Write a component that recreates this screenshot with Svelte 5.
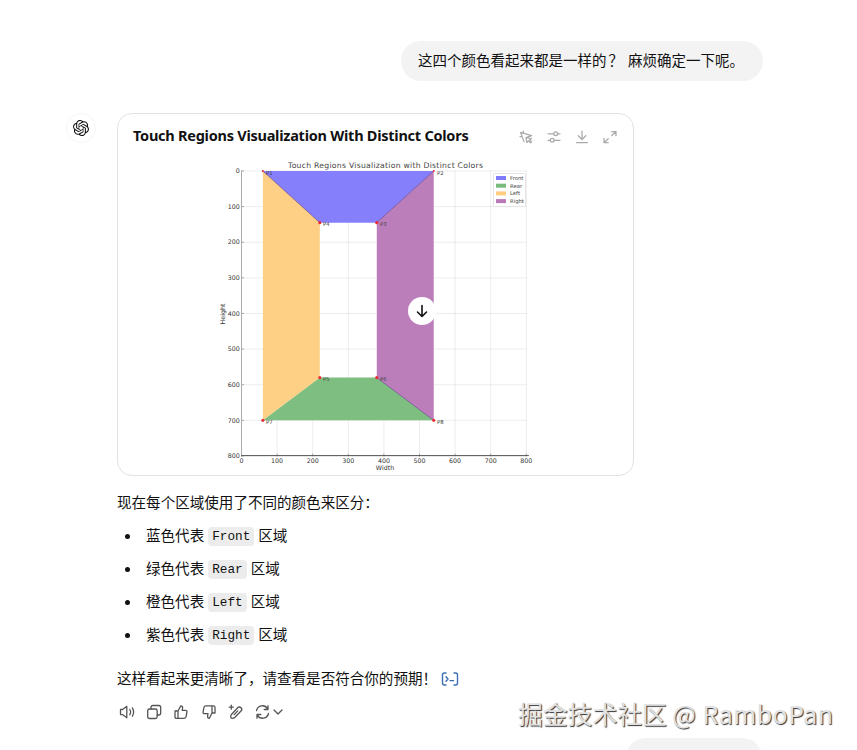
<script lang="ts">
interface Region {
	name: string;
	label: string;
	color: string;
	points: [number, number][];
}

const regions: readonly Region[] = [
	{ name: 'Front', label: '蓝色代表', color: '#817afb', points: [[60, 0], [540, 0], [380, 145], [220, 145]] },
	{ name: 'Rear', label: '绿色代表', color: '#79bb7c', points: [[220, 580], [380, 580], [540, 700], [60, 700]] },
	{ name: 'Left', label: '橙色代表', color: '#fdce80', points: [[60, 0], [220, 145], [220, 580], [60, 700]] },
	{ name: 'Right', label: '紫色代表', color: '#b979b8', points: [[540, 0], [540, 700], [380, 580], [380, 145]] },
];

const corners: readonly [number, number][] = [
	[60, 0], [540, 0], [380, 145], [220, 145],
	[220, 580], [380, 580], [60, 700], [540, 700],
];

const ticks = [0, 100, 200, 300, 400, 500, 600, 700, 800];

// Plot origin and scale inside the chart svg
const sx = (v: number) => 123.5 + v * 0.356;
const sy = (v: number) => 15 + v * 0.3562;
const toPoints = (points: [number, number][]) => points.map(([x, y]) => `${sx(x)},${sy(y)}`).join(' ');
</script>

<main class="chat">
	<div class="user-row">
		<p class="bubble">这四个颜色看起来都是一样的<span class="mark">？</span> 麻烦确定一下呢。</p>
	</div>

	<article class="reply">
		<div class="avatar">
			<svg width="16" height="16" viewBox="0 0 24 24" aria-hidden="true">
				<path d="M22.2819 9.8211a5.9847 5.9847 0 0 0-.5157-4.9108 6.0462 6.0462 0 0 0-6.5098-2.9A6.0651 6.0651 0 0 0 4.9807 4.1818a5.9847 5.9847 0 0 0-3.9977 2.9 6.0462 6.0462 0 0 0 .7427 7.0966 5.98 5.98 0 0 0 .511 4.9107 6.051 6.051 0 0 0 6.5146 2.9001A5.9847 5.9847 0 0 0 13.2599 24a6.0557 6.0557 0 0 0 5.7718-4.2058 5.9894 5.9894 0 0 0 3.9977-2.9001 6.0557 6.0557 0 0 0-.7475-7.0729zm-9.022 12.6081a4.4755 4.4755 0 0 1-2.8764-1.0408l.1419-.0804 4.7783-2.7582a.7948.7948 0 0 0 .3927-.6813v-6.7369l2.02 1.1686a.071.071 0 0 1 .038.052v5.5826a4.504 4.504 0 0 1-4.4945 4.4944zm-9.6607-4.1254a4.4708 4.4708 0 0 1-.5346-3.0137l.142.0852 4.783 2.7582a.7712.7712 0 0 0 .7806 0l5.8428-3.3685v2.3324a.0804.0804 0 0 1-.0332.0615L9.74 19.9502a4.4992 4.4992 0 0 1-6.1408-1.6464zM2.3408 7.8956a4.485 4.485 0 0 1 2.3655-1.9728V11.6a.7664.7664 0 0 0 .3879.6765l5.8144 3.3543-2.0201 1.1685a.0757.0757 0 0 1-.071 0l-4.8303-2.7865A4.504 4.504 0 0 1 2.3408 7.872zm16.5963 3.8558L13.1038 8.364 15.1192 7.2a.0757.0757 0 0 1 .071 0l4.8303 2.7913a4.4944 4.4944 0 0 1-.6765 8.1042v-5.6772a.79.79 0 0 0-.407-.667zm2.0107-3.0231l-.142-.0852-4.7735-2.7818a.7759.7759 0 0 0-.7854 0L9.409 9.2297V6.8974a.0662.0662 0 0 1 .0284-.0615l4.8303-2.7866a4.4992 4.4992 0 0 1 6.6802 4.66zM8.3065 12.863l-2.02-1.1638a.0804.0804 0 0 1-.038-.0567V6.0742a4.4992 4.4992 0 0 1 7.3757-3.4537l-.142.0805L8.704 5.459a.7948.7948 0 0 0-.3927.6813zm1.0976-2.3654l2.602-1.4998 2.6069 1.4998v2.9994l-2.5974 1.4997-2.6067-1.4997Z" />
			</svg>
		</div>

		<div class="content">
			<section class="card">
				<header>
					<h2>Touch Regions Visualization With Distinct Colors</h2>
					<div class="tools">
						<svg width="14" height="14" viewBox="0 0 14 14">
							<path d="M1.6 2.4 12.6 5.6 7 7.6M1.6 2.4 5 11.6M4.4 1v2.3M1 6.6h2M7 7.6l.9 4.9 1.4-1.7 2.2 2.1 1.1-1.1-2.1-2.1 2-1.2Z" />
						</svg>
						<svg width="14" height="14" viewBox="0 0 14 14">
							<path d="M1 3.8h5.8M10.6 3.8H13M1 10.3h2.3M7.1 10.3H13" />
							<circle cx="8.7" cy="3.8" r="1.9" />
							<circle cx="5.2" cy="10.3" r="1.9" />
						</svg>
						<svg width="14" height="14" viewBox="0 0 14 14">
							<path d="M7 1v8.4M3.2 5.7 7 9.5l3.8-3.8M1.5 12.5h11" />
						</svg>
						<svg width="14" height="14" viewBox="0 0 14 14">
							<path d="M8.8 1.5H13V5.7M13 1.5 8.8 5.5M1 8.3v4.4H5.2M1 12.7 5.2 8.7" />
						</svg>
					</div>
				</header>

				<svg class="chart" width="515" height="319" viewBox="0 0 515 319">
					<text class="chart-title" x="267.5" y="12" text-anchor="middle" textLength="195">Touch Regions Visualization with Distinct Colors</text>
					{#each ticks as tick (tick)}
						<path class="grid" d="M{sx(tick)} 15V300M123.5 {sy(tick)}H408.3" />
						<path class="tick" d="M{sx(tick)} 298v2M123.5 {sy(tick)}h2" />
						<text class="label" x={sx(tick)} y="306.5" text-anchor="middle">{tick}</text>
						<text class="label" x="121.8" y={sy(tick) + 2.2} text-anchor="end">{tick}</text>
					{/each}
					{#each regions as region (region.name)}
						<polygon points={toPoints(region.points)} fill={region.color} fill-opacity="0.96" />
					{/each}
					<path class="edge" d="M{sx(60)} {sy(0)}L{sx(220)} {sy(145)}M{sx(540)} {sy(0)}L{sx(380)} {sy(145)}M{sx(380)} {sy(580)}L{sx(540)} {sy(700)}" />
					<path d="M123.5 15V300" stroke="#aaa" />
					<path d="M123.5 299.6H410.5" stroke="#555" />
					{#each corners as [x, y], i (i)}
						<circle cx={sx(x)} cy={sy(y)} r={y === 0 ? 1 : 1.6} fill="#ed2d36" />
						<text class="point" x={sx(x) + 3.2} y={sy(y) + 3.7}>P{i + 1}</text>
					{/each}
					<text class="label" x="267" y="314.2" text-anchor="middle">Width</text>
					<text class="label" transform="translate(107.3 158) rotate(-90)" text-anchor="middle">Height</text>
					<rect x="375.5" y="17.5" width="32" height="33" rx="1" fill="#fff" stroke="#e4e4e4" />
					{#each regions as region, i (region.name)}
						<rect x="378" y={20 + i * 7.7} width="10" height="4" fill={region.color} />
						<text class="legend" x="392" y={24 + i * 7.7}>{region.name}</text>
					{/each}
				</svg>
			</section>

			<div class="prose">
				<p>现在每个区域使用了不同的颜色来区分：</p>
				<ul>
					{#each regions as region (region.name)}
						<li>{region.label} <code>{region.name}</code> 区域</li>
					{/each}
				</ul>
				<p class="closing">
					这样看起来更清晰了，请查看是否符合你的预期！
					<svg class="analysis" width="18" height="14" viewBox="0 0 18 14">
						<path d="M5 1H3.4Q1.5 1 1.5 2.9v8.2Q1.5 13 3.4 13H5M13 1h1.6q1.9 0 1.9 1.9v8.2q0 1.9-1.9 1.9H13M5 4.8 7 7 5 9.2M9 8.6h3.6" />
					</svg>
				</p>
			</div>

			<div class="actions">
				<svg width="16" height="16" viewBox="0 0 16 16">
					<path d="M1.5 5.5h2L7.8 2.4v11.4L3.5 10.6h-2ZM10.8 5.5q1.6 2.6 0 5.2M13.4 3.9q2.4 4.2 0 8.4" />
				</svg>
				<svg width="16" height="16" viewBox="0 0 16 16">
					<rect x="1.7" y="5" width="9.5" height="9.5" rx="1.8" />
					<path d="M5 5V3.4q0-1.9 1.9-1.9h5.9q1.9 0 1.9 1.9v5.7q0 1.9-1.9 1.9h-1.6" />
				</svg>
				<svg width="16" height="16" viewBox="0 0 16 16">
					<path d="M2 7h3v7.3H3.5Q2 14.3 2 12.8ZM5 7l2.8-5.1q2 .1 1.8 2.1L9.2 6.3h3.1q1.9 0 1.6 1.9l-.8 4.5q-.3 1.6-2 1.6H5" />
				</svg>
				<svg width="16" height="16" viewBox="0 0 16 16">
					<path d="M14 9h-3V1.9h1.5q1.5 0 1.5 1.5ZM11 9l-2.6 5.3q-2-.1-1.8-2.1L7 9.7H3.7Q1.8 9.7 2.1 7.8l.8-4.3q.3-1.6 2-1.6H11" />
				</svg>
				<svg width="16" height="16" viewBox="0 0 16 16">
					<path d="M3.2 10.8q-1.2 2.8.6 3.5 1.6.4 3.2-1.1l6-6.2a2.3 2.3 0 0 0-3.3-3.3ZM6.2 10.6l3.6-3.7M3.3 1.2v4M1.3 3.2h4" />
				</svg>
				<div class="retry">
					<svg width="15" height="16" viewBox="0 0 15 16">
						<path d="M1.5 6.5a6 6 0 0 1 11-1.8M13 1.7v3.8H9.2M13.5 9.5a6 6 0 0 1-11 1.8M2 14.3v-3.8h3.8" />
					</svg>
					<svg width="10" height="16" viewBox="0 0 10 16"><path d="m1 6 4 4 4-4" /></svg>
				</div>
			</div>
		</div>
	</article>

	<div class="next-message"></div>

	<button class="scroll-down" type="button" aria-label="Scroll to bottom">
		<svg width="14" height="14" viewBox="0 0 14 14"><path d="M7 1.5v11M2.5 8 7 12.5 11.5 8" /></svg>
	</button>
	<div class="watermark">掘金技术社区 <span>@ RamboPan</span></div>
</main>

<style>
	:global(body) { margin: 0; background: #fff; }
	.chat { position: relative; box-sizing: border-box; width: 857px; height: 750px; padding-top: 41px; overflow: hidden; background: #fff; color: #111; font: 14.55px/26px "Liberation Sans", "Noto Sans CJK SC", sans-serif; }
	svg { display: block; flex: none; fill: none; stroke-linecap: round; stroke-linejoin: round; }
	p { margin: 0; }
	.user-row { display: flex; justify-content: flex-end; padding-right: 94px; }
	.bubble { box-sizing: border-box; width: 362px; height: 40px; padding: 7px 0 7px 17px; border-radius: 20px; background: #f3f3f3; font-size: 14.5px; white-space: nowrap; }
	.mark { padding: 0 1px 0 2px; }
	.reply { display: flex; gap: 21px; margin: 32px 0 0 66px; }
	.avatar { display: grid; place-items: center; box-sizing: border-box; width: 30px; height: 30px; border: 1px solid #f5f5f5; border-radius: 50%; }
	.avatar svg { fill: #111; }
	.content { width: 517px; }
	.card { box-sizing: border-box; height: 363px; border: 1px solid #e2e2e2; border-radius: 15px; }
	.card header { display: flex; justify-content: space-between; align-items: center; box-sizing: border-box; height: 42px; padding: 0 16px 0 15px; }
	h2 { margin: 0; font: 700 14.5px/24px "Noto Sans", sans-serif; letter-spacing: -0.25px; white-space: nowrap; }
	.tools { display: flex; gap: 14px; padding-top: 3px; }
	.tools svg { stroke: #aaa; stroke-width: 1.25; }
	.chart text { font-family: "DejaVu Sans", sans-serif; fill: #444; }
	.chart .chart-title { font-size: 7.7px; }
	.chart .label { font-size: 6.3px; fill: #333; }
	.chart .point, .chart .legend { font-size: 5.3px; }
	.grid { stroke: #777; stroke-opacity: 0.17; stroke-width: 0.8; }
	.tick { stroke: #555; stroke-width: 0.5; }
	.edge { stroke: #65408c; stroke-width: 0.7; }
	.prose { padding-top: 14px; }
	ul { display: grid; gap: 7px; margin: 7px 0 18px; padding: 0 0 0 29px; list-style: none; }
	li { display: flex; align-items: center; gap: 4px; height: 26px; }
	li::before { content: ''; width: 5px; height: 5px; margin: 0 12px 0 -21px; border-radius: 50%; background: #111; }
	code { height: 19px; padding: 0 4px; border-radius: 4px; background: #ececec; font: 12.7px/19px "Liberation Mono", monospace; }
	.closing { display: flex; align-items: center; gap: 4px; white-space: nowrap; }
	.analysis { stroke: #3b6eb5; stroke-width: 1.4; }
	.actions { display: flex; gap: 11.2px; padding: 12px 0 0 2px; }
	.actions svg { stroke: #555; stroke-width: 1.3; }
	.retry { display: flex; gap: 3px; }
	.next-message { width: 136px; height: 40px; margin: 18px 0 0 626px; border-radius: 20px; background: #f3f3f3; }
	.scroll-down { position: absolute; left: 408px; top: 297px; display: grid; place-items: center; width: 28px; height: 28px; padding: 0; border: 0; border-radius: 50%; background: #fff; }
	.scroll-down svg { stroke: #111; stroke-width: 1.6; }
	.watermark { position: absolute; left: 518px; top: 696px; color: #e2e2e2; font: 24.8px/34px "Noto Sans CJK SC", sans-serif; text-shadow: 1px 1px 1px #333; white-space: nowrap; }
	.watermark span { letter-spacing: 0.55px; }
</style>
